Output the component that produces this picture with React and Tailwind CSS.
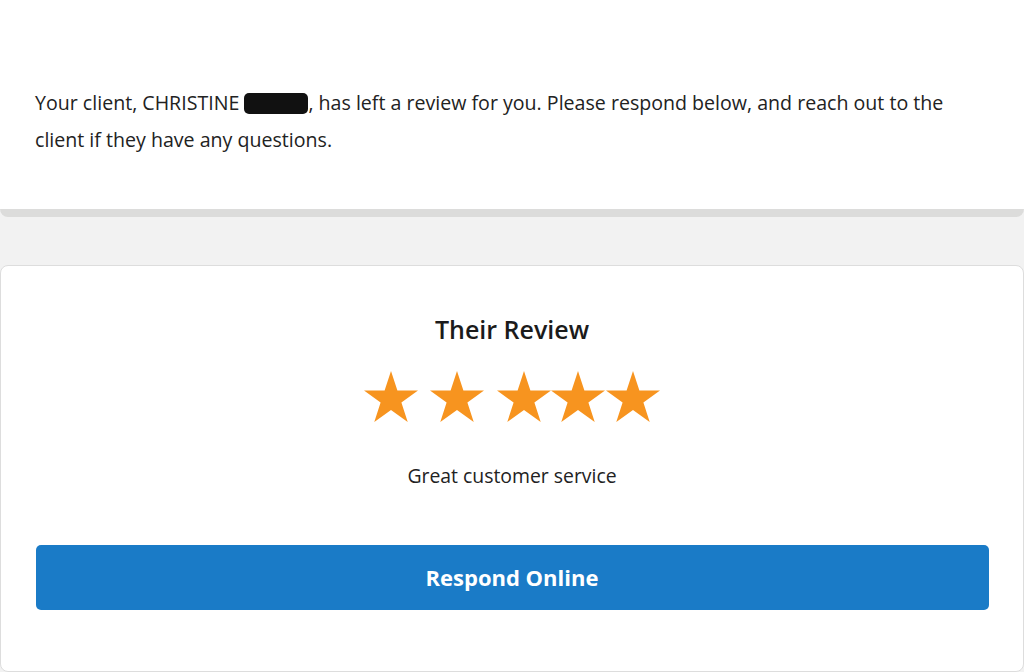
import React from 'react';

const FONT = { fontFamily: '"Open Sans", "Noto Sans", "Liberation Sans", sans-serif' };

function Star({ className = '' }) {
    return (
        <svg viewBox="0 0 54 51" className={`w-[54px] h-[51px] flex-shrink-0 ${className}`}>
            <path
                d="M27 0 L33.4 19.4 L54 19.5 L37.4 31.6 L43.7 51 L27 39 L10.3 51 L16.6 31.6 L0 19.5 L20.6 19.4 Z"
                fill="#f7941f"
            />
        </svg>
    );
}

export default function App() {
    return (
        <div className="w-[1024px] h-[672px] bg-[#f2f2f2] flex flex-col overflow-hidden text-[#1b1b1b]" style={FONT}>
            {/* Notice card */}
            <div className="bg-white h-[217px] rounded-b-[8px] border-b-[8px] border-[#dcdcdb] px-[35px] pt-[84px]">
                <p className="text-[19.6px] leading-[37px] text-[#222] pr-[40px]">
                    Your client, CHRISTINE{' '}
                    <span className="inline-block align-middle w-[64px] h-[21px] bg-[#111] rounded-[5px] -mt-[3px]" />
                    , has left a review for you. Please respond below, and reach out to the client if they have any questions.
                </p>
            </div>

            {/* Review card */}
            <div className="mt-[48px] flex-1 bg-white border border-[#dddddd] rounded-[8px] flex flex-col items-center pt-[46px]">
                <h2 className="text-[25px] leading-[34px] font-semibold text-[#1b1b1b]">Their Review</h2>
                <div className="flex mt-[25px] ml-[-1px]">
                    <Star />
                    <Star className="ml-[12px]" />
                    <Star className="ml-[13px]" />
                    <Star />
                    <Star className="ml-[1px]" />
                </div>
                <p className="mt-[41px] text-[19.4px] leading-[26px] text-[#222]">Great customer service</p>
                <button className="mt-[56px] w-[953px] h-[65px] bg-[#1a7bc7] rounded-[5px] text-white text-[22px] font-bold">
                    Respond Online
                </button>
            </div>
        </div>
    );
}
